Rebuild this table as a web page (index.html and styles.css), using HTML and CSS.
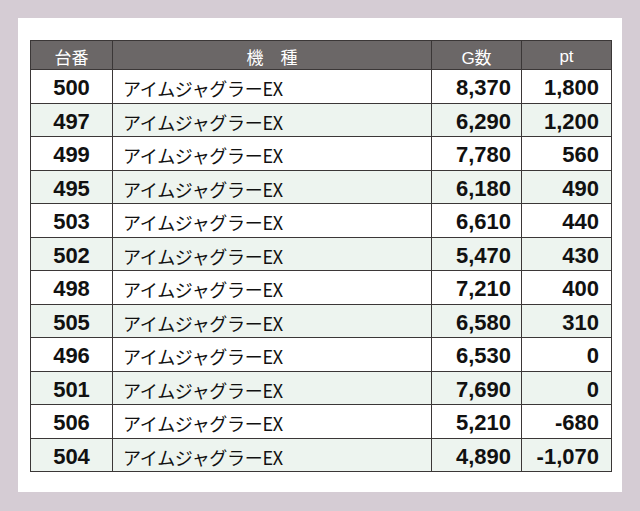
FILE: index.html
```html
<!DOCTYPE html>
<html lang="ja">
<head>
<meta charset="utf-8">
<link rel="stylesheet" href="styles.css">
</head>
<body>
<div class="card">
<table class="data">
<colgroup><col class="c1"><col class="c2"><col class="c3"><col class="c4"></colgroup>
<thead>
<tr><th>台番</th><th>機　種</th><th>G数</th><th>pt</th></tr>
</thead>
<tbody>
<tr><td class="no">500</td><td class="name">アイムジャグラーEX</td><td class="num">8,370</td><td class="num">1,800</td></tr>
<tr><td class="no">497</td><td class="name">アイムジャグラーEX</td><td class="num">6,290</td><td class="num">1,200</td></tr>
<tr><td class="no">499</td><td class="name">アイムジャグラーEX</td><td class="num">7,780</td><td class="num">560</td></tr>
<tr><td class="no">495</td><td class="name">アイムジャグラーEX</td><td class="num">6,180</td><td class="num">490</td></tr>
<tr><td class="no">503</td><td class="name">アイムジャグラーEX</td><td class="num">6,610</td><td class="num">440</td></tr>
<tr><td class="no">502</td><td class="name">アイムジャグラーEX</td><td class="num">5,470</td><td class="num">430</td></tr>
<tr><td class="no">498</td><td class="name">アイムジャグラーEX</td><td class="num">7,210</td><td class="num">400</td></tr>
<tr><td class="no">505</td><td class="name">アイムジャグラーEX</td><td class="num">6,580</td><td class="num">310</td></tr>
<tr><td class="no">496</td><td class="name">アイムジャグラーEX</td><td class="num">6,530</td><td class="num">0</td></tr>
<tr><td class="no">501</td><td class="name">アイムジャグラーEX</td><td class="num">7,690</td><td class="num">0</td></tr>
<tr><td class="no">506</td><td class="name">アイムジャグラーEX</td><td class="num">5,210</td><td class="num">-680</td></tr>
<tr><td class="no">504</td><td class="name">アイムジャグラーEX</td><td class="num">4,890</td><td class="num">-1,070</td></tr>
</tbody>
</table>
</div>
</body>
</html>
```
FILE: styles.css
```css
html, body {
  margin: 0;
  padding: 0;
  background: #d5ccd4;
}
body {
  height: 511px;
  overflow: hidden;
}
.card {
  margin: 18px 0 0 18px;
  width: 604px;
  height: 474px;
  box-sizing: border-box;
  padding: 22px 12px 0 12px;
  background: #ffffff;
}
.data {
  width: 581px;
  table-layout: fixed;
  border-collapse: collapse;
  font-family: "Liberation Sans", Arial, "Noto Sans CJK JP", sans-serif;
  color: #111;
}
.c1 { width: 82px; }
.c2 { width: 319px; }
.c3 { width: 90px; }
.c4 { width: 90px; }
.data th, .data td {
  border: 1px solid #3b3737;
  padding: 0;
}
.data th {
  height: 25px;
  padding-top: 3px;
  background: #6b6767;
  color: #ffffff;
  font-weight: normal;
  font-size: 17px;
  text-align: center;
  font-family: "Liberation Sans", Arial, "Noto Sans CJK JP", sans-serif;
}
.data td {
  height: 28.5px;
  padding-top: 4px;
}
.data tbody tr:nth-child(even) td {
  background: #edf4ef;
}
.no {
  text-align: center;
  font-weight: bold;
  font-size: 22px;
}
.name {
  padding-left: 10px !important;
  font-size: 18px;
  font-family: "Noto Sans CJK JP", sans-serif;
  letter-spacing: -0.3px;
}
.num {
  text-align: right;
  font-weight: bold;
  font-size: 22px;
  padding-right: 10px !important;
}
.data td.num:last-child {
  padding-right: 12px !important;
}
```
